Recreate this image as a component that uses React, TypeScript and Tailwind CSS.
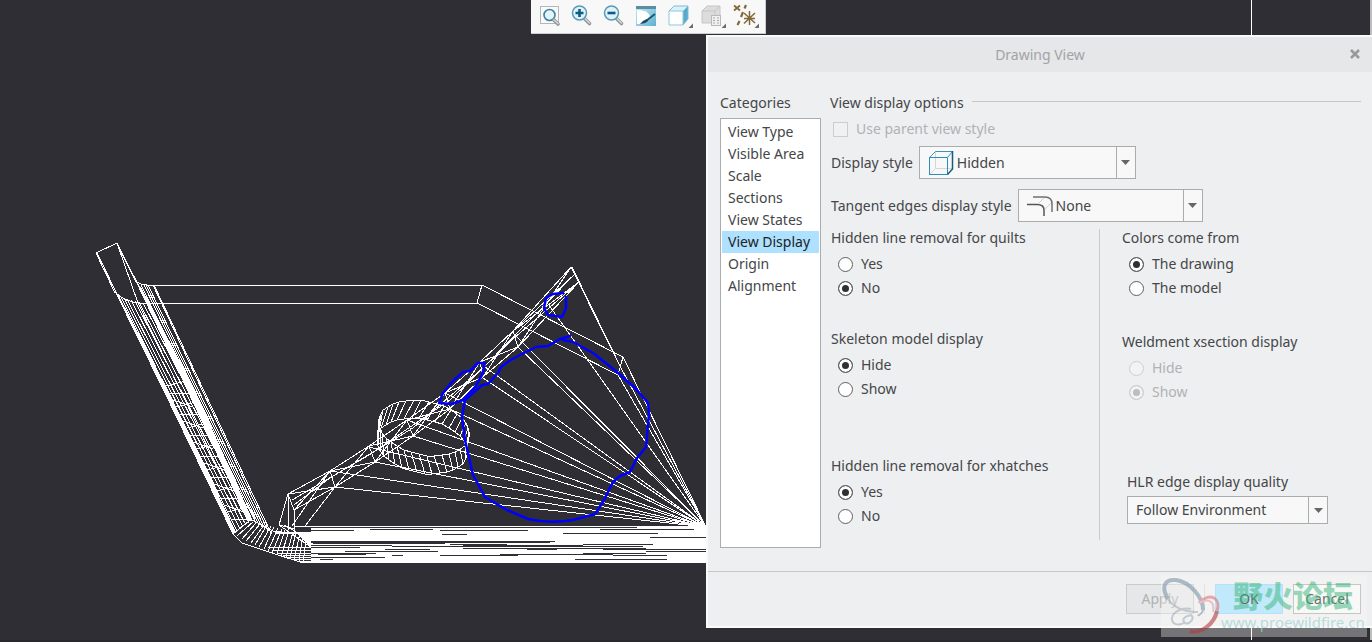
import type { ReactNode } from "react";

type Pt = [number, number];

const APEX: Pt = [706, 527];

const categories = [
  "View Type",
  "Visible Area",
  "Scale",
  "Sections",
  "View States",
  "View Display",
  "Origin",
  "Alignment",
];

// start points of the facets that all meet at the right corner of the part
const rays: Pt[] = [
  [546, 301], [512, 332], [518, 347], [485, 367], [483, 378],
  [445, 393], [450, 409], [407, 420], [413, 436], [369, 447], [375, 462],
  [330, 471], [335, 487], [623, 357], [618, 375], [620, 366],
];

// dark gaps inside the bottom flange: x1, x2, y
const gaps: [number, number, number][] = [
  [303, 475, 527], [475, 637, 527], [600, 694, 529], [370, 433, 529],
  [310, 354, 530], [440, 528, 530], [563, 658, 533], [442, 467, 534],
  [650, 706, 537], [311, 555, 541], [311, 550, 542], [313, 445, 543],
  [450, 507, 544], [583, 653, 544], [311, 392, 545], [463, 583, 545],
  [392, 643, 546], [311, 360, 547], [463, 646, 548], [385, 430, 549],
  [527, 557, 549], [603, 706, 549], [345, 438, 551], [646, 706, 551],
  [311, 376, 553], [583, 646, 553], [318, 366, 554], [500, 613, 554],
  [392, 403, 555], [440, 518, 555], [613, 667, 555], [311, 385, 557],
  [320, 333, 559], [575, 667, 559],
];

const upper: Pt[] = [
  [571, 267], [513, 331], [480, 362], [445, 393], [407, 420], [369, 446], [330, 471], [288, 494],
];
const lower: Pt[] = [
  [579, 282], [518, 347], [483, 377], [450, 409], [413, 436], [375, 462], [335, 487], [294, 510],
];

function d(points: Pt[]) {
  return "M" + points.map((p) => p.join(" ")).join("L");
}

function range(n: number) {
  return Array.from({ length: n }, (_, i) => i);
}

// point on the tilted hole rim
function rim(i: number, n: number, cx: number, cy: number): Pt {
  const t = (i / n) * Math.PI * 2;
  const x = 46 * Math.cos(t);
  const y = 27 * Math.sin(t);
  const a = 0.2;
  return [
    Math.round(cx + x * Math.cos(a) - y * Math.sin(a)),
    Math.round(cy + x * Math.sin(a) + y * Math.cos(a)),
  ];
}

function Wireframe() {
  const arm = [
    // curved inner faces
    ...[121, 124, 127, 131, 135, 139, 143].map((x, i) =>
      d([[x, 297 + Math.min(i, 6)], [237 + i * 3, 531 - i * 2]]),
    ),
    // outer faces on the right
    ...[141, 144, 146, 148, 153, 154].map((x, i) => d([[x, 285], [256 + i * 3, 523 + i * 2]])),
    d([[117, 243], [138, 303], [244, 522]]),
  ];
  const webs = range(20).map((i) => {
    const y = 386 + i * 7;
    const x = 163 + (y - 390) * 0.49;
    return d([[Math.round(x) + 5, y], [Math.round(x) + 25, y + (i % 3) * 6 - 5]]);
  });
  const bend = range(17).map((i) => {
    const t = i / 16;
    return d([
      [Math.round(249 + t * 58), Math.round(521 + t * 14)],
      [Math.round(233 + t * 70), Math.round(534 + t * 28 + Math.sin(t * 3.14) * 3)],
    ]);
  });
  const bendRows = [547, 550, 553, 555, 557, 559, 561].map((y, i) => d([[268 + i * 5, y], [312, y]]));
  const beam = [
    ...upper.slice(1).map((p, i) => d([p, lower[i + 1]])),
    ...upper.slice(1).map((p, i) => d([p, lower[i]])),
    ...lower.slice(1).map((p, i) => d([p, upper[i]])),
  ];
  const hole = range(36).map((i) => d([rim(i, 36, 424, 428), rim(i - 1, 36, 422, 446)]));
  const fan = rays.map((p) => d([p, APEX]));

  return (
    <svg width="1372" height="642" className="absolute left-0 top-0" aria-hidden="true">
      <g fill="none" stroke="#fff" strokeWidth="1" shapeRendering="crispEdges">
        <path d="M115 293L96 253L117 243L136 282M97 253L119 298M117 244L140 288" />
        <path d="M115 292Q124 302 140 303H477L482 285H147Q140 285 136 281" />
        <path d="M482 285L623 357L618 375L477 303" />
        <path d="M571 267L620 366M572 267L623 372M575 274L513 331M579 282L513 339L450 400L369 455L292 500" />
        <path d="M575 274L483 368L413 428L330 478L294 505" />
        <path d={d(upper)} />
        <path d={d(lower)} />
        <path d={arm.join("")} />
        <path d={webs.join("")} />
        <path d={bend.join("")} />
        <path d={bendRows.join("")} />
        <path d={beam.join("")} />
        <path d={fan.join("")} />
        <path d={d(range(37).map((i) => rim(i, 36, 424, 428)))} />
        <path d={d(range(37).map((i) => rim(i, 36, 422, 446)))} />
        <path d={hole.join("")} />
        <path d="M232 533L242 543L272 553L300 562H706M252 520L273 531L290 533H311" />
        <path d="M288 494L279 525L295 529M288 494L289 530M294 510L295 532M335 487L305 526M330 471L292 526M279 525L312 548M284 525L312 541" />
      </g>
      <g shapeRendering="crispEdges">
        <path d="M114 290L163 390L232 533L236 532L168 390L119 296Z" fill="#fff" />
        <path d="M135 280L187 390L248 521L253 521L195 390L142 289Z" fill="#fff" />
        <rect x="311" y="526" width="395" height="37" fill="#fff" />
        <rect x="275" y="532" width="36" height="2" fill="#fff" />
        <rect x="295" y="526" width="16" height="1" fill="#fff" />
        <path d="M298 534H311V548Z" fill="#fff" />
        {gaps.map(([x1, x2, y]) => (
          <rect key={`${x1}-${y}`} x={x1} y={y} width={x2 - x1} height="1" fill="#2f2e34" />
        ))}
      </g>
      <g fill="none" stroke="#0000ff" strokeWidth="2.5" strokeLinejoin="round" strokeLinecap="round">
        <path d="M570 336L560 339L548 346L536 347L522 354L509 361L501 367L498 373L488 384L482 385L465 400L462 417L465 440L468 453L473 475L485 497L507 510L528 519Q550 524 573 520L595 514L603 502L613 482L620 476L630 472L637 458L646 447L649 413L648 403L637 390L617 372L593 353L573 342L563 340" />
        <path d="M563 293L553 294L546 298L544 308L548 315L562 317L566 308V297" />
        <path d="M485 363H478L470 371L463 372L452 382L443 393L439 403L452 404L463 400L475 387L482 375Z" />
      </g>
      <path d="M1251.5 0V642" stroke="#fff" />
      <path d="M1371 0V642" stroke="#bdbdbd" strokeWidth="2" />
      <path d="M0 641H1372" stroke="#29282e" strokeWidth="2" />
    </svg>
  );
}

function Lens() {
  return (
    <>
      <path d="M13.5 13.5L18.5 18.5" stroke="#8f9496" strokeWidth="3.6" strokeLinecap="round" />
      <path d="M14 13.5L18.5 18" stroke="#d5d8d9" strokeWidth="1.6" strokeLinecap="round" />
    </>
  );
}

function ToolButton({ label, menu, children }: { label: string; menu?: boolean; children: ReactNode }) {
  return (
    <button
      type="button"
      aria-label={label}
      className={`flex h-8 items-center justify-center ${menu ? "w-[33px]" : "w-8"}`}
    >
      <svg width="22" height="22" viewBox="0 0 22 22" fill="none" className="overflow-visible">
        {children}
        {menu && <path d="M25 18.500V23H20.500Z" fill="#6b6b6b" />}
      </svg>
    </button>
  );
}

function Toolbar() {
  return (
    <div className="absolute left-[531px] top-0 flex h-[34px] w-[235px] border-b border-r border-[#c9cfcf] bg-[#f8f8f8] pl-[3px]">
      <ToolButton label="Refit">
        <rect x="1.5" y="1.5" width="18" height="17" fill="#fafafa" stroke="#b4b6b7" />
        <circle cx="10.500" cy="10" r="5.500" fill="#e3f4fa" stroke="#3f83a0" strokeWidth="1.600" />
        <path d="M15 15L19 19" stroke="#8f9496" strokeWidth="3.600" strokeLinecap="round" />
        <path d="M15 15L19 18.500" stroke="#d5d8d9" strokeWidth="1.600" strokeLinecap="round" />
      </ToolButton>
      <ToolButton label="Zoom In">
        <Lens />
        <circle cx="8.500" cy="8" r="7" fill="#dff2f9" stroke="#5c9ab3" strokeWidth="1.500" />
        <path d="M8.500 4V12M4.500 8H12.500" stroke="#0d5c85" strokeWidth="2.600" />
      </ToolButton>
      <ToolButton label="Zoom Out">
        <Lens />
        <circle cx="8.500" cy="8" r="7" fill="#dff2f9" stroke="#5c9ab3" strokeWidth="1.500" />
        <path d="M4.500 8H12.500" stroke="#0d5c85" strokeWidth="2.600" />
      </ToolButton>
      <ToolButton label="Repaint">
        <defs>
          <linearGradient id="repaint" x1="0" y1="0" x2="1" y2="1">
            <stop offset="0" stopColor="#c9eaf4" />
            <stop offset="1" stopColor="#5fb0ce" />
          </linearGradient>
        </defs>
        <rect x="1" y="1" width="20" height="20" fill="url(#repaint)" />
        <path d="M2 5Q13 5 15 11L8 19H2Z" fill="#fff" />
        <path d="M1 2.500H21" stroke="#5b8ea2" strokeWidth="3" />
        <path d="M20 9L11 16" stroke="#1b5873" strokeWidth="1.800" />
        <path d="M5 19Q8 15 12 14L13 16Q10 19 5 19Z" fill="#164a66" />
      </ToolButton>
      <ToolButton label="Display Style" menu>
        <path d="M1 6L6 1H20L15 6Z" fill="#d9f1f9" />
        <path d="M15 6L20 1V14L15 20Z" fill="#58aaca" />
        <path d="M1 6H15V20H1Z" fill="#fff" stroke="#8fc7dc" />
        <path d="M1 6L6 1H20V14L15 20" stroke="#7dbdd5" />
      </ToolButton>
      <ToolButton label="Saved Orientations" menu>
        <path d="M1 6L6 1H19V12L14 18H1Z" fill="#dcdcdc" stroke="#c6c6c6" />
        <path d="M1 6H14V18M14 6L19 1" stroke="#c6c6c6" />
        <rect x="10.500" y="10.500" width="9" height="10" fill="#f0f0f0" stroke="#b9b9b9" />
        <path d="M12 13H14M16 13H18M12 15.500H14M16 15.500H18M12 18H14M16 18H18" stroke="#aaa" />
      </ToolButton>
      <ToolButton label="Datum Display Filters" menu>
        <g stroke="#83693a" strokeWidth="1.800">
          <path d="M0 0.500L6 5.500M6 0.500L0 5.500" />
          <path d="M12 0L10.500 3.500M9 7L7 12M5.500 16L3.500 20" strokeWidth="2.200" />
          <path d="M15.500 6V20M10 8L21 18M21 8L10 18.500M10 13.500H21" strokeWidth="1.500" />
        </g>
      </ToolButton>
    </div>
  );
}

function HiddenIcon() {
  return (
    <svg width="26" height="26" viewBox="0 0 26 26" fill="none">
      <path d="M7.500 1V18.500H25M7.500 18.500L1 25" stroke="#d3d5d6" />
      <path d="M1.500 7.500L7.500 1.500H24.500L19.500 7.500" stroke="#3b93b5" />
      <path d="M1.500 7.500H19.500V24.500H1.500Z" stroke="#2b8fb5" />
      <path d="M24.500 1V19L19.500 24.500" stroke="#0f5f85" strokeWidth="1.500" />
    </svg>
  );
}

function TangentIcon() {
  return (
    <svg width="26" height="22" viewBox="0 0 26 22" fill="none">
      <path d="M6 2H18Q25 2 25 9V17" stroke="#707070" strokeWidth="1.500" />
      <path d="M0 9.500H10Q17 9.500 17 15V21" stroke="#555" strokeWidth="1.500" />
      <path d="M11 9L17 3M18 14L24 8" stroke="#cfcfcf" />
    </svg>
  );
}

function Picker({
  id,
  options,
  icon,
  box,
}: {
  id: string;
  options: string[];
  icon?: ReactNode;
  box: string;
}) {
  return (
    <div className={`relative border border-[#aaacae] bg-[#f8f8f8] ${box}`}>
      {icon && <span className="pointer-events-none absolute inset-y-0 left-2 flex items-center">{icon}</span>}
      <select
        id={id}
        className={`h-full w-full appearance-none bg-transparent pr-5 outline-none ${icon ? "pl-[37px]" : "pl-2"}`}
      >
        {options.map((o) => (
          <option key={o}>{o}</option>
        ))}
      </select>
      <span className="pointer-events-none absolute inset-y-0 right-0 flex w-[19px] items-center justify-center border-l border-[#aaacae]">
        <svg width="9" height="5" viewBox="0 0 9 5">
          <path d="M0 0H9L4.500 5Z" fill="#666" />
        </svg>
      </span>
    </div>
  );
}

function RadioGroup({
  title,
  name,
  options,
  value,
  disabled,
}: {
  title: string;
  name: string;
  options: string[];
  value: string;
  disabled?: boolean;
}) {
  return (
    <fieldset disabled={disabled} className="min-w-0">
      <legend className="mb-[3px] whitespace-nowrap">{title}</legend>
      {options.map((o) => (
        <label key={o} className={`flex h-6 items-center gap-2 pl-[7px] ${disabled ? "text-[#b0b2b4]" : ""}`}>
          <input
            type="radio"
            name={name}
            defaultChecked={o === value}
            className="size-[15px] appearance-none rounded-full border border-[#606060] bg-white checked:bg-[#303030] checked:shadow-[inset_0_0_0_3px_white] disabled:border-[#cccecf] disabled:bg-[#f2f3f4] disabled:checked:bg-[#bcbebd] disabled:checked:shadow-[inset_0_0_0_3px_#f2f3f4]"
          />
          {o}
        </label>
      ))}
    </fieldset>
  );
}

function DrawingViewDialog() {
  return (
    <section
      role="dialog"
      aria-labelledby="dialog-title"
      className="absolute left-[706px] right-0 top-[35px] border-2 border-r-0 border-[#fafafa] bg-[#eeeff1]"
    >
      <header className="relative flex h-[35px] items-center justify-center bg-[#e6e7e8]">
        <h1 id="dialog-title" className="text-[#a2a3a5]">Drawing View</h1>
        <button type="button" aria-label="Close" className="absolute right-3 top-3">
          <svg width="10" height="10" viewBox="0 0 10 10" className="block">
            <path d="M1 1L9 9M9 1L1 9" stroke="#999" strokeWidth="2.600" />
          </svg>
        </button>
      </header>

      <div className="flex gap-[9px] pb-[23px] pl-3 pr-[11px] pt-5">
        <div className="flex w-[101px] shrink-0 flex-col">
          <h2>Categories</h2>
          <ul className="mt-1 min-h-[430px] flex-1 border border-[#aaacae] bg-white px-px py-0.5">
            {categories.map((c) => (
              <li key={c}>
                <button
                  type="button"
                  className={`block w-full whitespace-nowrap pl-1.5 text-left ${c === "View Display" ? "bg-[#ade1ff] text-[#222]" : ""}`}
                >
                  {c}
                </button>
              </li>
            ))}
          </ul>
        </div>

        <div className="min-w-0 flex-1">
          <h2 className="flex items-center gap-2">
            View display options
            <span className="mb-1 h-px flex-1 bg-[#c5c7c9]" />
          </h2>
          <label className="mt-1 flex items-center gap-2 pl-[3px] text-[#b0b2b4]">
            <input type="checkbox" disabled className="size-[15px] appearance-none border border-[#cbcdcf] bg-[#f0f1f2]" />
            Use parent view style
          </label>
          <div className="mt-1.5 flex items-center gap-1.5 pl-px">
            <label htmlFor="display-style">Display style</label>
            <Picker
              id="display-style"
              options={["Hidden", "Wireframe", "No Hidden", "Shading"]}
              icon={<HiddenIcon />}
              box="h-[33px] w-[217px]"
            />
          </div>
          <div className="mt-2.5 flex items-center gap-1.5 pl-px">
            <label htmlFor="tangent-style">Tangent edges display style</label>
            <Picker
              id="tangent-style"
              options={["None", "Solid", "Dimmed", "Phantom"]}
              icon={<TangentIcon />}
              box="h-[33px] w-[185px]"
            />
          </div>

          <div className="mt-[5px] flex pl-px">
            <div className="w-[268px]">
              <RadioGroup title="Hidden line removal for quilts" name="quilts" options={["Yes", "No"]} value="No" />
              <div className="mt-7">
                <RadioGroup title="Skeleton model display" name="skeleton" options={["Hide", "Show"]} value="Hide" />
              </div>
              <div className="mt-[54px]">
                <RadioGroup title="Hidden line removal for xhatches" name="xhatches" options={["Yes", "No"]} value="Yes" />
              </div>
            </div>
            <div className="mb-[-12px] mt-0.5 w-px bg-[#c9cbcd]" />
            <div className="pl-[22px]">
              <RadioGroup
                title="Colors come from"
                name="colors"
                options={["The drawing", "The model"]}
                value="The drawing"
              />
              <div className="mt-[31px]">
                <RadioGroup
                  title="Weldment xsection display"
                  name="weldment"
                  options={["Hide", "Show"]}
                  value="Show"
                  disabled
                />
              </div>
              <div className="mt-[67px] pl-[5px]">
                <label htmlFor="hlr-quality" className="mb-[3px] block">HLR edge display quality</label>
                <Picker
                  id="hlr-quality"
                  options={["Follow Environment", "Very Rough HLR", "High"]}
                  box="h-7 w-[201px]"
                />
              </div>
            </div>
          </div>
        </div>
      </div>

      <footer className="flex items-center justify-end border-t border-[#c5c7c9] pb-3 pr-[11px] pt-3">
        <button type="button" disabled className="h-[30px] w-[68px] border border-[#c9cbcd] bg-[#e6e7e8] text-[#b0b2b4]">
          Apply
        </button>
        <span className="mx-2.5 h-[30px] w-px bg-[#d5d7d9]" />
        <button type="button" className="h-[30px] w-[68px] border border-[#8fd6fa] bg-[#a4e0ff] text-[#111]">
          OK
        </button>
        <button type="button" className="ml-2.5 h-[30px] w-[68px] border border-[#aaacae] bg-[#f8f8f8] text-[#222]">
          Cancel
        </button>
      </footer>
    </section>
  );
}

function Watermark() {
  return (
    <div className="pointer-events-none absolute right-[5px] top-[575px] flex h-[62px] w-[206px] bg-[#f8faf6]/35">
      <svg width="60" height="62" viewBox="0 0 60 62" fill="none" className="shrink-0 opacity-60">
        <path d="M7 24C-1 10 5 4 15 5C29 7 42 22 42 35" stroke="#7f95aa" strokeWidth="4" />
        <path d="M42 35C41 40 39 38 37 41" stroke="#8c9aa6" strokeWidth="2" />
        <path d="M7 24C12 32 25 38 37 37" stroke="#a4b0ba" strokeWidth="2" />
        <path d="M30 34C18 32 10 39 11 45C12 50 19 51 24 47M31 40C24 41 20 44 24 48C29 50 34 43 30 40" stroke="#a4b0ba" strokeWidth="2" />
        <path d="M38 28C50 16 60 24 56 36" stroke="#df7379" strokeWidth="3" />
        <path d="M56 36C53 50 39 59 29 56" stroke="#b23a42" strokeWidth="4" />
        <path d="M38 28C49 22 54 28 52 37" stroke="#e8a0a4" strokeWidth="2" />
      </svg>
      <div className="flex-1 whitespace-nowrap pr-1.5 text-center">
        <div className="mt-0.5 font-['Noto_Sans_CJK_SC',sans-serif] text-[30px] font-black leading-[34px] text-[#35b378]/50">
          野火论坛
        </div>
        <div className="mt-px text-[15px] leading-5 text-[#9bd3cf]/70">www.proewildfire.cn</div>
      </div>
    </div>
  );
}

export default function App() {
  return (
    <main className="relative min-h-screen overflow-hidden bg-[#2f2e34] font-['Noto_Sans','Open_Sans',sans-serif] text-sm leading-[22px] text-[#444648]">
      <Wireframe />
      <Toolbar />
      <DrawingViewDialog />
      <Watermark />
    </main>
  );
}
